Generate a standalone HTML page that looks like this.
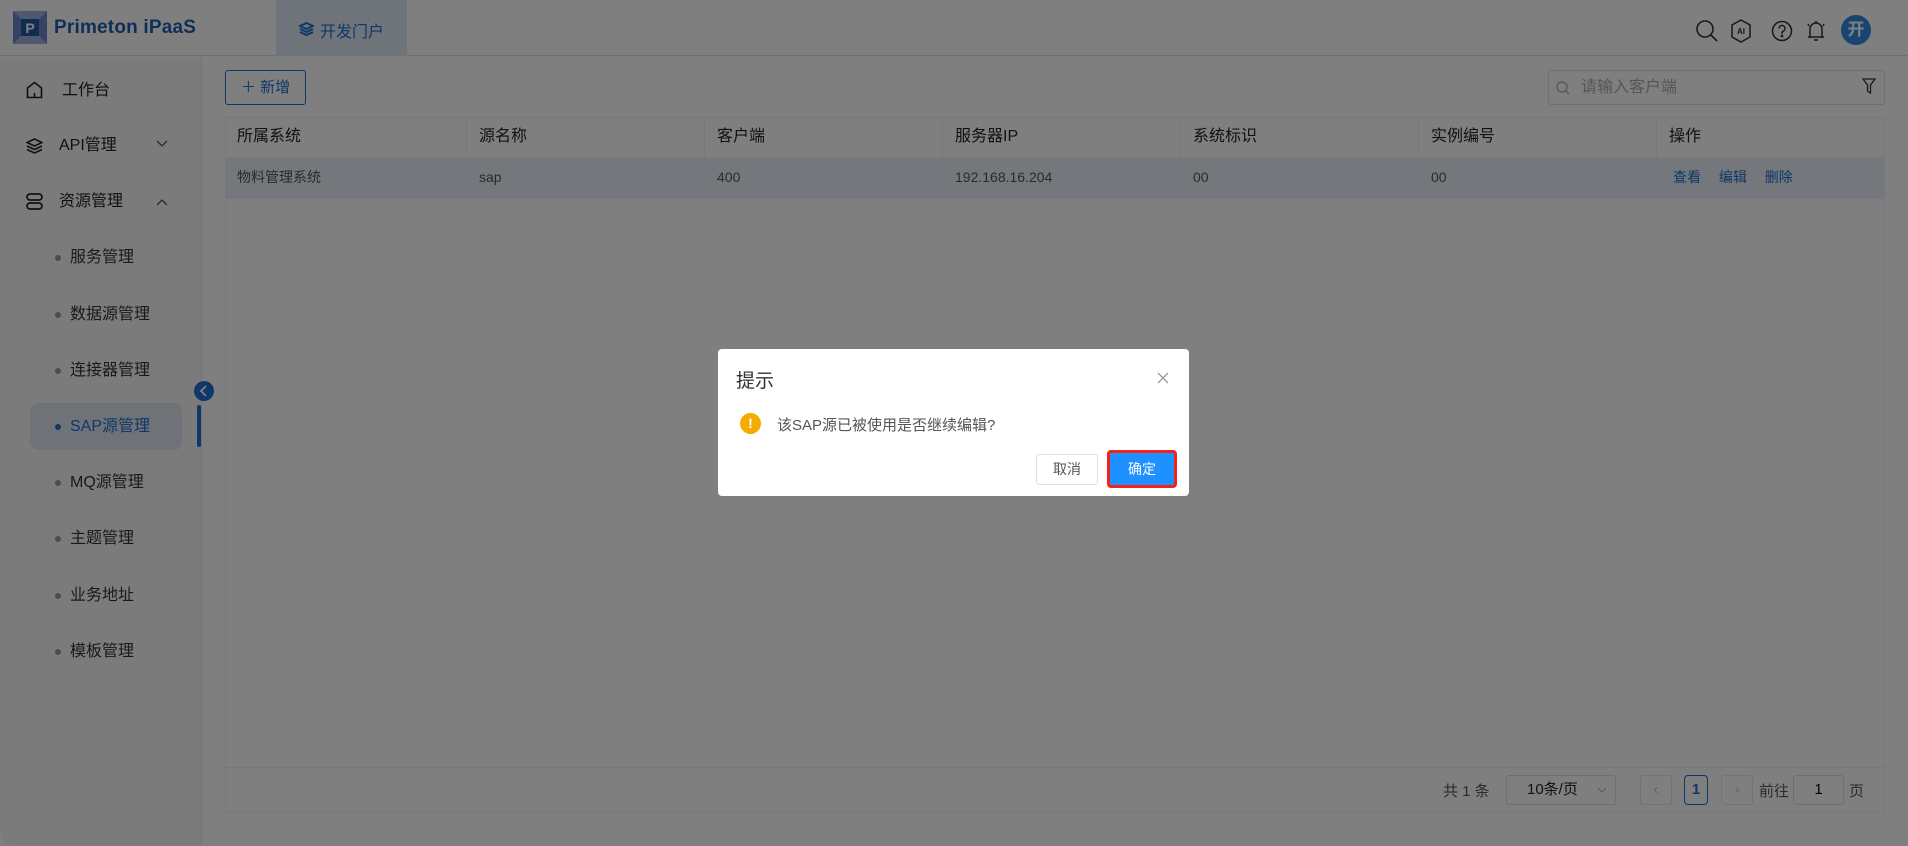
<!DOCTYPE html>
<html><head><meta charset="utf-8"><style>
*{box-sizing:border-box;margin:0;padding:0}
body{width:1908px;height:846px;background:#fff;font-family:"Liberation Sans","Noto Sans CJK SC",sans-serif;overflow:hidden;position:relative}
.page{position:absolute;left:0;top:0;width:1908px;height:846px;border-radius:16px;overflow:hidden;background:#fff}
.abs{position:absolute}
.hdr{left:0;top:0;width:1908px;height:56px;background:#fff;border-bottom:1px solid #dcdfe6}
.side{left:0;top:57px;width:202px;height:789px;background:#f7f7f8;border-right:1px solid #e4e6ea}
.mi{position:absolute;left:0;font-size:16px;color:#222;height:24px;line-height:24px}
.sub{position:absolute;left:70px;font-size:16px;color:#333;line-height:24px}
.sub:before{content:"";position:absolute;left:-15px;top:9px;width:6px;height:6px;border-radius:3px;background:#999}
.sub.act:before{background:#1f6fcf}
.th{position:absolute;top:117px;height:40px;line-height:40px;font-size:16px;color:#222;padding-left:12px;border-right:1px solid #ebeef5}
.td{position:absolute;top:157px;height:41px;line-height:41px;font-size:14px;color:#555;padding-left:12px}
.ov{position:absolute;left:0;top:0;width:1908px;height:846px;background:rgba(0,0,0,.5)}
</style></head><body>
<div class="page">
<div class="abs hdr"></div>
<svg class="abs" style="left:13px;top:11px" width="34" height="33" viewBox="0 0 34 33"><rect width="34" height="33" fill="#6c86c8"/><polygon points="0,0 34,0 26,8 8,8" fill="#9fb1de"/><polygon points="0,33 34,33 26,25 8,25" fill="#9fb1de"/><rect x="8" y="8" width="18" height="17" fill="#1f5aa8"/><text x="17" y="22" font-size="14" font-weight="bold" fill="#fff" text-anchor="middle" font-family="Liberation Sans">P</text></svg>
<div class="abs" style="left:54px;top:17px;font-size:19px;font-weight:bold;color:#1f5fb0;letter-spacing:.2px">Primeton iPaaS</div>
<div class="abs" style="left:276px;top:0;width:131px;height:56px;background:#dfe8f5"></div>
<svg class="abs" style="left:299px;top:22px" width="15" height="14" viewBox="0 0 15 14" fill="none" stroke="#1f6fcf" stroke-width="2"><path d="M7.5 1L14 4 7.5 7 1 4z"/><path d="M1 7l6.5 3 6.5-3M1 10l6.5 3 6.5-3"/></svg>
<div class="abs" style="left:320px;top:18px;font-size:16px;color:#1f6fcf">开发门户</div>
<svg class="abs" style="left:1695px;top:19px" width="24" height="24" viewBox="0 0 24 24" fill="none" stroke="#333" stroke-width="1.6"><circle cx="10" cy="10" r="8"/><path d="M16 16l6 6"/></svg>
<svg class="abs" style="left:1730px;top:19px" width="22" height="24" viewBox="0 0 22 24" fill="none" stroke="#333" stroke-width="1.5"><path d="M11 1l9 5v12l-9 5-9-5V6z"/><text x="11" y="15" font-size="8" font-weight="bold" fill="#333" stroke="none" text-anchor="middle" font-family="Liberation Sans">AI</text></svg>
<svg class="abs" style="left:1771px;top:20px" width="22" height="22" viewBox="0 0 22 22" fill="none" stroke="#333" stroke-width="1.5"><circle cx="11" cy="11" r="9.5"/><path d="M8 8.5a3 3 0 1 1 4 2.8c-.7.3-1 .8-1 1.7v.8"/><circle cx="11" cy="16" r=".6" fill="#333"/></svg>
<svg class="abs" style="left:1805px;top:18px" width="22" height="26" viewBox="0 0 22 26" fill="none" stroke="#333" stroke-width="1.5"><path d="M5 19V11a6 6 0 0 1 12 0v8M3 19h16M9 22h4M11 3v2M3 6l1 2M19 6l-1 2"/></svg>
<div class="abs" style="left:1841px;top:15px;width:30px;height:30px;border-radius:15px;background:#2f8be0;color:#fff;font-weight:bold;font-size:17px;text-align:center;line-height:30px">开</div>

<div class="abs side"></div>
<svg class="abs" style="left:26px;top:81px" width="17" height="18" viewBox="0 0 17 18" fill="none" stroke="#222" stroke-width="1.6"><path d="M1.5 7L8.5 1.5 15.5 7v9.5h-14z"/><path d="M8.5 12v4"/></svg>
<div class="mi" style="left:62px;top:79px">工作台</div>
<svg class="abs" style="left:26px;top:138px" width="17" height="16" viewBox="0 0 17 16" fill="none" stroke="#222" stroke-width="1.6"><path d="M8.5 1L16 4.5 8.5 8 1 4.5z"/><path d="M1 8l7.5 3.5L16 8M1 11.5L8.5 15l7.5-3.5"/></svg>
<div class="mi" style="left:59px;top:134px">API管理</div>
<svg class="abs" style="left:156px;top:140px" width="12" height="8" fill="none" stroke="#555" stroke-width="1.3"><path d="M1 1l5 5 5-5"/></svg>
<svg class="abs" style="left:26px;top:193px" width="17" height="17" viewBox="0 0 17 17" fill="none" stroke="#222" stroke-width="1.7"><rect x="1" y="1" width="15" height="6" rx="3"/><rect x="1" y="10" width="15" height="6" rx="3"/></svg>
<div class="mi" style="left:59px;top:190px">资源管理</div>
<svg class="abs" style="left:156px;top:198px" width="12" height="8" fill="none" stroke="#555" stroke-width="1.3"><path d="M1 7l5-5 5 5"/></svg>
<div class="sub" style="top:246px">服务管理</div>
<div class="sub" style="top:303px">数据源管理</div>
<div class="sub" style="top:359px">连接器管理</div>
<div class="abs" style="left:30px;top:403px;width:152px;height:47px;border-radius:8px;background:#dfe6f1"></div>
<div class="sub act" style="top:415px;color:#1f6fcf">SAP源管理</div>
<div class="sub" style="top:471px">MQ源管理</div>
<div class="sub" style="top:527px">主题管理</div>
<div class="sub" style="top:584px">业务地址</div>
<div class="sub" style="top:640px">模板管理</div>
<div class="abs" style="left:197px;top:405px;width:4px;height:42px;border-radius:2px;background:#1f6fcf"></div>
<div class="abs" style="left:194px;top:381px;width:20px;height:20px;border-radius:10px;background:#1f6fcf"></div>
<svg class="abs" style="left:199px;top:385px" width="10" height="12" fill="none" stroke="#fff" stroke-width="1.8"><path d="M7 1L2 6l5 5"/></svg>

<div class="abs" style="left:225px;top:70px;width:81px;height:35px;border:1px solid #1f6fcf;border-radius:3px;color:#1f6fcf;font-size:15px;line-height:33px;text-align:center">＋ 新增</div>
<div class="abs" style="left:1548px;top:70px;width:337px;height:35px;border:1px solid #dcdfe6;border-radius:3px"></div>
<svg class="abs" style="left:1556px;top:81px" width="14" height="14" fill="none" stroke="#aaa" stroke-width="1.3"><circle cx="6" cy="6" r="5"/><path d="M10 10l3 3"/></svg>
<div class="abs" style="left:1581px;top:76px;font-size:16px;color:#aaa;line-height:24px">请输入客户端</div>
<svg class="abs" style="left:1862px;top:78px" width="14" height="17" fill="none" stroke="#333" stroke-width="1.3"><path d="M1 1h12L8.5 7v8L5.5 13V7z"/></svg>

<div class="abs" style="left:225px;top:117px;width:1660px;height:695px;border:1px solid #ebeef5"></div>
<div class="abs" style="left:226px;top:157px;width:1658px;height:41px;background:#e9eef6"></div>
<div class="abs" style="left:226px;top:198px;width:1658px;height:1px;background:#ebeef5"></div>
<div class="th" style="left:225px;width:242px">所属系统</div>
<div class="th" style="left:467px;width:238px">源名称</div>
<div class="th" style="left:705px;width:238px">客户端</div>
<div class="th" style="left:943px;width:238px">服务器IP</div>
<div class="th" style="left:1181px;width:238px">系统标识</div>
<div class="th" style="left:1419px;width:238px">实例编号</div>
<div class="th" style="left:1657px;width:228px;border:none">操作</div>
<div class="td" style="left:225px">物料管理系统</div>
<div class="td" style="left:467px">sap</div>
<div class="td" style="left:705px">400</div>
<div class="td" style="left:943px">192.168.16.204</div>
<div class="td" style="left:1181px">00</div>
<div class="td" style="left:1419px">00</div>
<div class="td" style="left:1661px;color:#1f6fcf;word-spacing:14px">查看 编辑 删除</div>
<div class="abs" style="left:226px;top:767px;width:1658px;height:1px;background:#ebeef5"></div>
<div class="abs" style="left:1443px;top:780px;font-size:15px;color:#555">共 1 条</div>
<div class="abs" style="left:1506px;top:775px;width:110px;height:30px;border:1px solid #dcdfe6;border-radius:3px;font-size:15px;color:#222;line-height:28px;padding-left:20px">10条/页</div>
<svg class="abs" style="left:1597px;top:787px" width="10" height="7" fill="none" stroke="#bbb" stroke-width="1.2"><path d="M1 1l4 4 4-4"/></svg>
<div class="abs" style="left:1640px;top:775px;width:32px;height:30px;border:1px solid #e4e6ea;border-radius:3px;color:#ccc;text-align:center;line-height:28px">‹</div>
<div class="abs" style="left:1684px;top:775px;width:24px;height:30px;border:1px solid #1f6fcf;border-radius:4px;color:#1f6fcf;text-align:center;line-height:28px;font-weight:bold;font-size:15px">1</div>
<div class="abs" style="left:1721px;top:775px;width:32px;height:30px;border:1px solid #e4e6ea;border-radius:3px;color:#ccc;text-align:center;line-height:28px">›</div>
<div class="abs" style="left:1759px;top:780px;font-size:15px;color:#555">前往</div>
<div class="abs" style="left:1793px;top:775px;width:51px;height:30px;border:1px solid #dcdfe6;border-radius:3px;text-align:center;line-height:28px;font-size:15px">1</div>
<div class="abs" style="left:1849px;top:780px;font-size:15px;color:#555">页</div>
</div>
<div class="ov"></div>
<div class="abs" style="left:718px;top:349px;width:471px;height:147px;background:#fff;border-radius:4px"></div>
<div class="abs" style="left:736px;top:366px;font-size:19px;color:#303133">提示</div>
<svg class="abs" style="left:1157px;top:372px" width="12" height="12" stroke="#999" stroke-width="1.3"><path d="M1 1l10 10M11 1L1 11"/></svg>
<div class="abs" style="left:740px;top:413px;width:21px;height:21px;border-radius:11px;background:#f5ab00;color:#fff;font-weight:bold;font-size:14px;text-align:center;line-height:21px">!</div>
<div class="abs" style="left:777px;top:414px;font-size:15px;color:#555">该SAP源已被使用是否继续编辑?</div>
<div class="abs" style="left:1036px;top:454px;width:62px;height:31px;border:1px solid #dcdfe6;border-radius:3px;font-size:14px;color:#555;text-align:center;line-height:29px">取消</div>
<div class="abs" style="left:1107px;top:450px;width:70px;height:38px;border:3px solid #f5221b;border-radius:4px;background:#1e90ff"></div>
<div class="abs" style="left:1110px;top:453px;width:64px;height:32px;font-size:14px;color:#fff;text-align:center;line-height:32px">确定</div>
</body></html>
